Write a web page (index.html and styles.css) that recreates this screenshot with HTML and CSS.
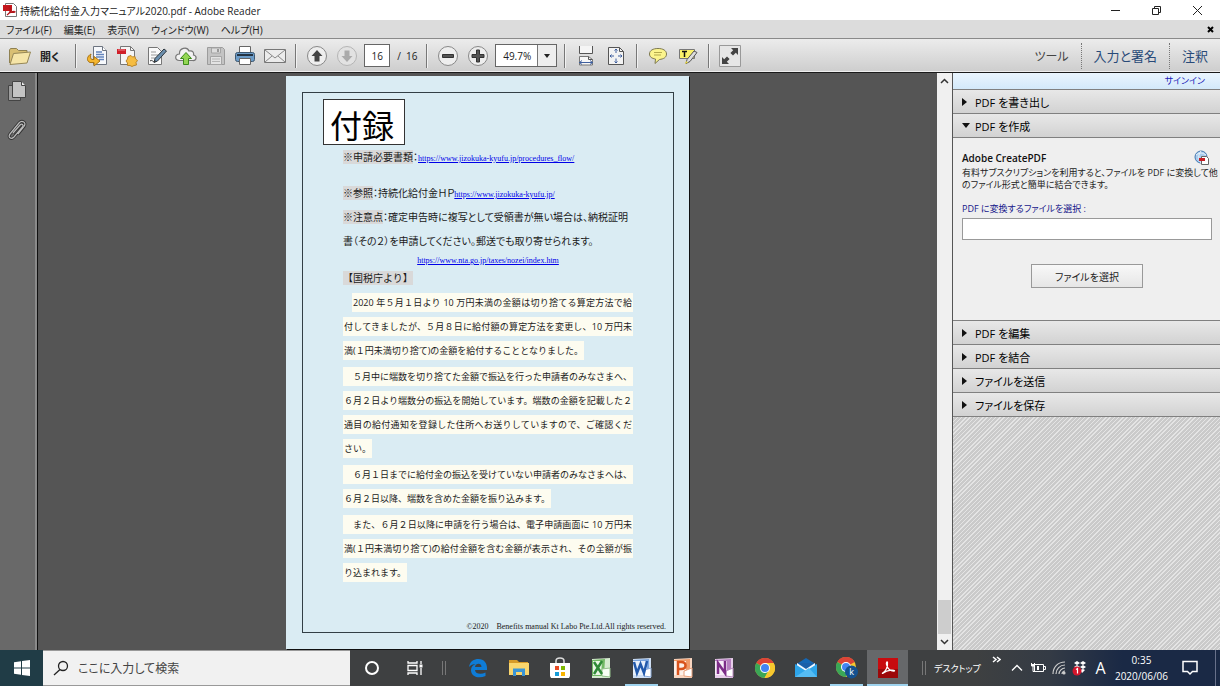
FILE: index.html
```html
<!DOCTYPE html>
<html lang="ja">
  <head>
    <meta charset="UTF-8">
    <title>持続化給付金入力マニュアル2020.pdf - Adobe Reader</title>
    <link rel="stylesheet" href="styles.css">
  </head>
  <body>
    <!-- Title bar -->
    <header class="titlebar">
      <svg class="app-icon" width="14" height="14" viewBox="0 0 14 14">
        <path d="M2.5.5h8l3 3v10h-11z" fill="#fff" stroke="#777"/>
        <path d="M0 2h9v6H0z" fill="#c4161c"/>
        <path d="M4 12c3-2 4-5 3-8-1-1-1 1 0 3s3 3 5 2c1-1-5-1-8 3z" fill="none" stroke="#b3151b" stroke-width="1.2"/>
      </svg>
      <span class="title-text">持続化給付金入力マニュアル2020.pdf - Adobe Reader</span>
      <div class="window-buttons">
        <button aria-label="最小化"><svg width="11" height="11"><path d="M1 5.5h9" stroke="#222"/></svg></button>
        <button aria-label="元に戻す"><svg width="11" height="11" fill="none" stroke="#222"><path d="M1.5 3.5h6v6h-6zM3.5 3.5v-2h6v6h-2"/></svg></button>
        <button aria-label="閉じる"><svg width="11" height="11"><path d="M1 1l9 9M10 1l-9 9" stroke="#222"/></svg></button>
      </div>
    </header>

    <!-- Menu -->
    <nav class="menubar">
      <button>ファイル(F)</button>
      <button>編集(E)</button>
      <button>表示(V)</button>
      <button>ウィンドウ(W)</button>
      <button>ヘルプ(H)</button>
      <button class="menu-close" aria-label="文書を閉じる"><svg width="7" height="7"><path d="M1 1l5 5M6 1l-5 5" stroke="#000" stroke-width="2"/></svg></button>
    </nav>

    <!-- Toolbar -->
    <div class="toolbar">
      <button class="open-button">
        <svg width="24" height="20" viewBox="0 0 24 20">
          <path d="M1.5 17V4l1-1.5h6l2 2h8.5V7" fill="#d9bf73" stroke="#8f8152"/>
          <path d="M2 18.5l3.5-11 17-1.5-3.5 11z" fill="#f6e5a8" stroke="#968756"/>
        </svg>
        開く
      </button>
      <span class="sep"></span>
      <div class="group file-group">
        <button aria-label="変換"><svg width="22" height="22" viewBox="0 0 22 22">
          <path d="M7.5 1.5h9l4 4v14h-13z" fill="#f7f9fc" stroke="#6d7480"/><path d="M16.5 1.5v4h4" fill="#fff" stroke="#6d7480"/>
          <path d="M10 7h6M10 9.5h8M10 12h8M13 14.5h5" stroke="#6385bd" stroke-width="1.5"/>
          <path d="M5 9C1 11 0 16 4 17.5h4V21l6-5-6-4.5v3H6C4 14 4 11 5 9z" fill="#f5b62f" stroke="#a87313"/>
        </svg></button>
        <button aria-label="PDF を作成"><svg width="22" height="22" viewBox="0 0 22 22">
          <path d="M4.500 1.500h10l4 4v14h-14z" fill="#f5f5f5" stroke="#777"/><path d="M14.5 1.5v4h4" fill="none" stroke="#777"/>
          <path d="M1 4h9v5H1z" fill="#d0202a"/><path d="M2 5h7" stroke="#ed858b"/>
          <path d="M15 10.5l1.500 1.500 2.500-.5.5 2.500 2 1.500-1.500 2 .5 2.500-2.500.5-2 1-2-1-2.500 0 0-2.500-1.500-2 1.500-2 .5-2.500z" fill="#f6bd42" stroke="#b9862d"/>
        </svg></button>
        <button aria-label="署名"><svg width="22" height="22" viewBox="0 0 22 22">
          <path d="M2.5 2.5h9l4 4v13h-13z" fill="#fafafa" stroke="#777"/>
          <path d="M5 7h5M5 10h7M5 13h5" stroke="#999"/>
          <path d="M18 4l2.5 2-9 10-3.5 1.5 1-4z" fill="#6b8fae" stroke="#2c353d"/><path d="M4 16c3-2 2 2 6 0" fill="none" stroke="#333"/>
        </svg></button>
        <button aria-label="アップロード"><svg width="22" height="22" viewBox="0 0 22 22">
          <path d="M4.5 15.5C-1 15 0 9 4.5 9 4 3 12 1 14 6c4-1 5 2 4.5 4 4 1 3 6-1 5.5z" fill="#f2f2f2" stroke="#777" stroke-width="1.2"/>
          <path d="M11 7.5l5.500 6h-3v6h-5v-6h-3z" fill="#93d653" stroke="#3c8a1a"/>
        </svg></button>
        <button aria-label="保存"><svg width="20" height="20" viewBox="0 0 20 20">
          <path d="M1.5 1.5h15l2 2v15h-17z" fill="#c4c4c4" stroke="#9c9c9c"/><path d="M5.5 2h9v5h-9z" fill="#ddd" stroke="#a5a5a5"/><path d="M11 3h2v3h-2z" fill="#999"/><path d="M4.5 10.500h11v8h-11z" fill="#e3e3e3" stroke="#a5a5a5"/><path d="M6 13h8M6 15.5h8" stroke="#b5b5b5"/>
        </svg></button>
        <button aria-label="印刷"><svg width="22" height="22" viewBox="0 0 22 22">
          <path d="M5.5 1.5h11v7h-11z" fill="#fff" stroke="#666"/>
          <rect x="1.5" y="7.5" width="19" height="9" rx="2" fill="#6c9cc8" stroke="#3e5870"/><path d="M3 10h16" stroke="#243444" stroke-width="2"/>
          <path d="M5.5 13.5h11v6h-11z" fill="#fff" stroke="#666"/>
        </svg></button>
        <button aria-label="メール"><svg width="22" height="16" viewBox="0 0 22 16">
          <path d="M.5 1.5h21v13H.5z" fill="#ececec" stroke="#777"/><path d="M1 2l10 8 10-8M1 14l7-6M21 14l-7-6" fill="none" stroke="#888"/>
        </svg></button>
      </div>
      <span class="sep"></span>
      <div class="group">
        <button aria-label="前のページ"><svg width="22" height="22" viewBox="0 0 22 22"><circle cx="11" cy="11" r="9.500" fill="#eee" stroke="#888"/><path d="M11 5l5.500 6H13.500v5.500h-5V11H5.500z" fill="#444"/></svg></button>
        <button aria-label="次のページ"><svg width="22" height="22" viewBox="0 0 22 22"><circle cx="11" cy="11" r="9.500" fill="#e2e2e2" stroke="#b5b5b5"/><path d="M11 17l5.500-6H13.500V5.500h-5V11H5.500z" fill="#aaa"/></svg></button>
        <input class="page-number" type="text" value="16" aria-label="ページ番号">
        <span class="page-total">/&nbsp; 16</span>
      </div>
      <span class="sep"></span>
      <div class="group">
        <button aria-label="縮小"><svg width="22" height="22" viewBox="0 0 22 22"><circle cx="11" cy="11" r="9.500" fill="#eee" stroke="#888"/><path d="M5.500 9.500h11v3h-11z" fill="#555" stroke="#333"/></svg></button>
        <button aria-label="拡大"><svg width="22" height="22" viewBox="0 0 22 22"><circle cx="11" cy="11" r="9.500" fill="#eee" stroke="#888"/><path d="M9.500 5h3v4.500H17v3h-4.500V17h-3v-4.500H5v-3h4.500z" fill="#555" stroke="#333"/></svg></button>
        <div class="zoom-box">
          <select aria-label="倍率">
            <option>49.7%</option>
            <option>75%</option>
            <option>100%</option>
          </select>
        </div>
      </div>
      <span class="sep"></span>
      <div class="group">
        <button aria-label="幅に合わせる"><svg width="18" height="20" viewBox="0 0 18 20" fill="none">
          <path d="M2.500 0v7.500h13V0" fill="#f5f5f5" stroke="#555"/><path d="M2.500 19V10.500h9l4 3V19z" fill="#f7f7f7" stroke="#777"/><path d="M11.500 10.500v3h4" stroke="#555"/>
          <path d="M2 16.500h14M5 14.500l-2.500 2 2.500 2M13 14.500l2.500 2-2.500 2" stroke="#3f5f9e"/>
        </svg></button>
        <button aria-label="全体を表示"><svg width="18" height="20" viewBox="0 0 18 20" fill="none">
          <path d="M1.500 1.500h11l4 4v13h-15z" fill="#f3f3f3" stroke="#555"/><path d="M12.500 1.500v4h4" stroke="#555"/>
          <path d="M9 3v4M9 12.500V17M3 10h4M11 10h4M7.500 4.500L9 3l1.500 1.500M7.500 15.500L9 17l1.500-1.500M4.500 8.500L3 10l1.500 1.500M13.500 8.500L15 10l-1.500 1.500" stroke="#3f5f9e"/>
        </svg></button>
      </div>
      <span class="sep"></span>
      <div class="group">
        <button aria-label="ノート注釈"><svg width="20" height="18" viewBox="0 0 20 18">
          <path d="M10 1.500c5 0 8.500 2 8.500 5.500s-3 5-7 5.500L7 16.500 7.500 12C4 11.500 1.500 10 1.500 7 1.500 3.500 5 1.500 10 1.500z" fill="#fbf48d" stroke="#7e7951"/><path d="M6 5.500h8M6 8h7" stroke="#b3a94d"/>
        </svg></button>
        <button aria-label="テキストをハイライト表示"><svg width="20" height="18" viewBox="0 0 20 18">
          <path d="M1.500 2.500h15v9h-15z" fill="#fbf26a" stroke="#777"/><path d="M4 4.500h5M6.500 4.500V10" stroke="#111" stroke-width="1.500"/>
          <path d="M16 4l3 1.500-7 9-4 2 1-4z" fill="#ddd" stroke="#555"/><path d="M8 14l2 1.500-3 1.500z" fill="#e8d63b"/>
        </svg></button>
      </div>
      <span class="sep"></span>
      <button aria-label="フルスクリーン"><svg width="22" height="22" viewBox="0 0 22 22">
        <path d="M.5.5h21v21H.5z" fill="#e6e6e6" stroke="#999"/>
        <path d="M19 3v7l-2.200-2.200-2.800 2.800-2.600-2.600 2.800-2.800L12 3zM3 19v-7l2.200 2.200L8 11.400l2.600 2.600-2.800 2.800L10 19z" fill="#444"/>
      </svg></button>
      <div class="panel-tabs">
        <button class="tab current">ツール</button>
        <button class="tab">入力と署名</button>
        <button class="tab">注釈</button>
      </div>
    </div>

    <main class="workspace">
      <!-- Navigation strip -->
      <aside class="nav-strip">
        <button aria-label="ページサムネール"><svg width="20" height="22" viewBox="0 0 20 22">
          <path d="M1.500 5.500h12v15h-12z" fill="#9d9d9d" stroke="#444"/><path d="M5.500 1.500h9l4 4v12h-13z" fill="#c4c4c4" stroke="#444"/><path d="M14.500 1.500v4h4" fill="#eee" stroke="#444"/>
        </svg></button>
        <button aria-label="添付ファイル"><svg width="20" height="22" viewBox="0 0 20 22" fill="none">
          <path d="M6 14l7-8c2-2 4 0 2.500 2L7 18c-3 3-6.500 0-4-3L12 4c3-3.500 8-.5 5 3.500L11 15" stroke="#333" stroke-width="3"/><path d="M6 14l7-8c2-2 4 0 2.500 2L7 18c-3 3-6.500 0-4-3L12 4c3-3.500 8-.5 5 3.500L11 15" stroke="#bbb" stroke-width="1.200"/>
        </svg></button>
      </aside>

      <!-- Document -->
      <section class="document">
        <article class="page">
          <div class="frame">
            <h1>付録</h1>
            <div class="notes">
              <p class="spaced"><mark>※申請必要書類</mark>：<a href="#">https://www.jizokuka-kyufu.jp/procedures_flow/</a></p>
              <p><mark>※参照</mark>：持続化給付金ＨＰ<a href="#">https://www.jizokuka-kyufu.jp/</a></p>
              <p><mark>※注意点</mark>：確定申告時に複写として受領書が無い場合は、納税証明<br>書（その２）を申請してください。郵送でも取り寄せられます。</p>
              <p class="center-link"><a href="#">https://www.nta.go.jp/taxes/nozei/index.htm</a></p>
              <p class="source"><mark>【国税庁より】</mark></p>
            </div>
            <div class="notice">
              <p>
                <span class="line full indent">2020 年５月１日より 10 万円未満の金額は切り捨てる算定方法で給</span>
                <span class="line full">付してきましたが、５月８日に給付額の算定方法を変更し、10 万円未</span>
                <span class="line">満(１円未満切り捨て)の金額を給付することとなりました。</span>
              </p>
              <p>
                <span class="line full">　５月中に端数を切り捨てた金額で振込を行った申請者のみなさまへ、</span>
                <span class="line full">６月２日より端数分の振込を開始しています。端数の金額を記載した２</span>
                <span class="line full">通目の給付通知を登録した住所へお送りしていますので、ご確認くだ</span>
                <span class="line">さい。</span>
              </p>
              <p>
                <span class="line full">　６月１日までに給付金の振込を受けていない申請者のみなさまへは、</span>
                <span class="line">６月２日以降、端数を含めた金額を振り込みます。</span>
              </p>
              <p>
                <span class="line full">　また、６月２日以降に申請を行う場合は、電子申請画面に 10 万円未</span>
                <span class="line full">満(１円未満切り捨て)の給付金額を含む金額が表示され、その全額が振</span>
                <span class="line">り込まれます。</span>
              </p>
            </div>
            <footer>©2020　Benefits manual Kt Labo Pte.Ltd.All rights reserved.</footer>
          </div>
        </article>
      </section>

      <div class="scrollbar">
        <button aria-label="上へスクロール"><svg width="9" height="6"><path d="M1 5l3.500-3.500L8 5" fill="none" stroke="#333" stroke-width="1.500"/></svg></button>
        <div class="track"><div class="thumb"></div></div>
        <button aria-label="下へスクロール"><svg width="9" height="6"><path d="M1 1l3.500 3.500L8 1" fill="none" stroke="#333" stroke-width="1.500"/></svg></button>
      </div>

      <!-- Tools panel -->
      <aside class="tools">
        <div class="signin"><a href="#">サインイン</a></div>
        <button class="section">PDF を書き出し</button>
        <button class="section open">PDF を作成</button>
        <div class="create">
          <div class="create-head">
            <h2>Adobe CreatePDF</h2>
            <svg width="16" height="16" viewBox="0 0 16 16">
              <circle cx="7" cy="7" r="6" fill="#a9cdee" stroke="#4478b0"/><path d="M2 5c4-3 7-2 10 0M7 1c-3 4-3 8 0 12" fill="none" stroke="#e8f3fc"/>
              <path d="M7.500 6.500h5l2 2v6h-7z" fill="#fff" stroke="#666"/><path d="M5 8h6v3H5z" fill="#c81f25"/>
            </svg>
          </div>
          <p>有料サブスクリプションを利用すると、ファイルを PDF に変換して他<br>のファイル形式と簡単に結合できます。</p>
          <label for="pdf-file">PDF に変換するファイルを選択 :</label>
          <input type="text" id="pdf-file">
          <button class="choose">ファイルを選択</button>
        </div>
        <button class="section">PDF を編集</button>
        <button class="section">PDF を結合</button>
        <button class="section">ファイルを送信</button>
        <button class="section">ファイルを保存</button>
        <div class="hatch"></div>
      </aside>
    </main>

    <!-- Windows taskbar -->
    <footer class="taskbar">
      <button class="start" aria-label="スタート"><svg width="16" height="16" viewBox="0 0 16 16" fill="#fff"><path d="M0 2.200l7-1v6.300H0zM8 1.100L16 0v7.500H8zM0 8.500h7v6.300l-7-1zM8 8.500h8V16l-8-1.100z"/></svg></button>
      <div class="search">
        <svg width="16" height="16" viewBox="0 0 16 16" fill="none" stroke="#222" stroke-width="1.300"><circle cx="10" cy="6" r="4.500"/><path d="M7 9.500L1 15"/></svg>
        <input type="text" placeholder="ここに入力して検索" aria-label="検索">
      </div>
      <button class="shell" aria-label="Cortana"><svg width="16" height="16"><circle cx="8" cy="8" r="6" fill="none" stroke="#fff" stroke-width="2"/></svg></button>
      <button class="shell" aria-label="タスクビュー"><svg width="16" height="16" viewBox="0 0 16 16" fill="none" stroke="#fff" stroke-width="1.300"><path d="M1 1v2h9V1M1 5.500h9v5H1zM1 15v-2h9v2M14 1v3M14 8v7"/><path d="M12.500 4.500h3v3h-3z" fill="#fff" stroke="none"/></svg></button>
      <span class="grip"></span>
      <div class="apps">
        <button aria-label="Edge"><svg width="20" height="20" viewBox="0 0 20 20"><path d="M1 9C2 3 6 1 10.500 1 16 1 19 5 19 10v2H7c.3 4 6 5 10.500 2.500V18C11 21 3 19 3 12c0-3 2-5 4.500-6C5 6 2.500 7 1 9zm6 0h6.500C13.500 4.500 7.500 5 7 9z" fill="#0f7cd6" fill-rule="evenodd"/></svg></button>
        <button aria-label="エクスプローラー"><svg width="20" height="18" viewBox="0 0 20 18"><path d="M0 1h8l2 2h9v3H0z" fill="#d79b28"/><path d="M0 4h20v12H0z" fill="#fad66d"/><path d="M4 17V9.500h12V17h-3v-4H7v4z" fill="#3b95d5"/></svg></button>
        <button aria-label="Microsoft Store"><svg width="22" height="22" viewBox="0 0 22 22"><path d="M7 7V4c0-4 8-4 8 0v3" fill="none" stroke="#ddd" stroke-width="1.500"/><path d="M1 6h20v13l-1 2H2l-1-2z" fill="#fff"/><path d="M6 9h4v4H6z" fill="#e84b25"/><path d="M12 9h4v4h-4z" fill="#7db700"/><path d="M6 15h4v4H6z" fill="#159cd8"/><path d="M12 15h4v4h-4z" fill="#f9b400"/></svg></button>
        <button aria-label="Excel"><svg width="20" height="20" viewBox="0 0 20 20"><path d="M1 1l18-1v20H1z" fill="#d6ebd0"/><path d="M1 2l13-1-1 17H1z" fill="#72b865"/><path d="M2 3h9l-1 14H2z" fill="#e9f6e4"/><path d="M11 11l8-1v9l-8-1z" fill="#f8fff5" stroke="#94c18c"/><path d="M3 4l8 12M11 3L3 16" stroke="#2f8a37" stroke-width="2.500"/></svg></button>
        <button class="running" aria-label="Word"><svg width="20" height="20" viewBox="0 0 20 20"><path d="M1 1l18-1v20H1z" fill="#cfdff4"/><path d="M1 2l16-1v14H1z" fill="#7ba5dd"/><path d="M1 3h14v14H1z" fill="#e8f0fb"/><path d="M12 12l7-2v9l-7-1z" fill="#fff" stroke="#8cabd9"/><path d="M2 4l3 11 3.500-9L12 15l3-12" fill="none" stroke="#2259ab" stroke-width="2.500"/></svg></button>
        <button aria-label="PowerPoint"><svg width="20" height="20" viewBox="0 0 20 20"><path d="M1 1l18-1v20H1z" fill="#f8d5c0"/><path d="M1 2l16-1v14H1z" fill="#ef9a68"/><path d="M1 3h12v14H1z" fill="#fdf0e8"/><path d="M11 13l8-3v9l-8-1z" fill="#fff" stroke="#e7a07a"/><path d="M5 17V4h3c6 0 6 7 0 7H5" fill="none" stroke="#d9531c" stroke-width="2.500"/></svg></button>
        <button aria-label="OneNote"><svg width="20" height="20" viewBox="0 0 20 20"><path d="M1 1l18-1v20H1z" fill="#e6cdea"/><path d="M1 2l16-1v14H1z" fill="#b67fc0"/><path d="M1 3h12v14H1z" fill="#f7edf8"/><path d="M12 13l7-3v9l-7-1z" fill="#fff" stroke="#b98ac0"/><path d="M4 16V5l7 10V3" fill="none" stroke="#7c2c88" stroke-width="2.500"/></svg></button>
        <button aria-label="Chrome"><svg width="20" height="20" viewBox="0 0 20 20"><circle cx="10" cy="10" r="10" fill="#f7c82e"/><path d="M10 10L1.300 5A10 10 0 0 1 18.700 5z" fill="#dc4437"/><path d="M10 10L1.300 5A10 10 0 0 0 9.500 20L14 12z" fill="#3aa757"/><path d="M10 5h8.700A10 10 0 0 1 9.500 20L14 12z" fill="#f7c82e"/><circle cx="10" cy="10" r="5" fill="#fff"/><circle cx="10" cy="10" r="4" fill="#4285f4"/></svg></button>
        <button aria-label="メール"><svg width="22" height="20" viewBox="0 0 22 20"><path d="M0 7l11-7 11 7z" fill="#1567b4"/><path d="M2 5h18v8H2z" fill="#f1f7fd"/><path d="M2 5h18l-9 6z" fill="#1a5fa8"/><path d="M0 6l11 7 11-7v13H0z" fill="#2da5ea"/><path d="M0 19L14 10l8 9z" fill="#55bcf3"/></svg></button>
        <button class="running" aria-label="Chrome k"><svg width="22" height="22" viewBox="0 0 22 22"><circle cx="10" cy="10" r="10" fill="#f7c82e"/><path d="M10 10L1.300 5A10 10 0 0 1 18.700 5z" fill="#dc4437"/><path d="M10 10L1.300 5A10 10 0 0 0 9.500 20L14 12z" fill="#3aa757"/><circle cx="10" cy="10" r="5" fill="#fff"/><circle cx="10" cy="10" r="4" fill="#4285f4"/><circle cx="15.500" cy="15" r="6.500" fill="#14518f"/><text x="15.500" y="18" text-anchor="middle" class="badge-letter">k</text></svg></button>
        <button class="running active" aria-label="Adobe Reader"><svg width="20" height="20" viewBox="0 0 20 20"><path d="M0 0h20v20H0z" fill="#c80b0f"/><path d="M0 11h20v9H0z" fill="#9c0809"/><path d="M4 15.500c4-2 6-7 5.500-11-.5-1.500-1.500 0-1 2 1 4 4 7 8 6.500 1-1-6-2-12 2.500z" fill="none" stroke="#fff" stroke-width="1.200"/></svg></button>
      </div>
      <span class="grip"></span>
      <div class="tray">
        <span class="desktop-label">デスクトップ</span>
        <button class="more" aria-label="その他"><svg width="9" height="7" fill="none" stroke="#fff" stroke-width="1.500"><path d="M1 1l3 2.500L1 6M5 1l3 2.500L5 6"/></svg></button>
        <button aria-label="隠れているアイコン"><svg width="12" height="8"><path d="M1 6.500l5-5 5 5" fill="none" stroke="#fff" stroke-width="1.300"/></svg></button>
        <button aria-label="電源"><svg width="16" height="12" viewBox="0 0 16 12" fill="none" stroke="#fff"><path d="M4.500 2.500h9v7h-9zM14 4.500h1.500v3H14M1.500 1v3h3V1M3 4v5.500h2"/><path d="M1 2h4v2H1zM7 4h2v4H7z" fill="#fff" stroke="none"/></svg></button>
        <button aria-label="ネットワーク"><svg width="14" height="14" viewBox="0 0 14 14" fill="none" stroke="#ccc" stroke-width="1.200"><path d="M1 13C1 6 6 1 13 1M4 13c0-5 4-9 9-9M7 13c0-3 3-6 6-6M10 13c0-1 1-3 3-3"/><circle cx="12" cy="12" r="1" fill="#fff"/></svg></button>
        <button aria-label="Dropbox"><svg width="16" height="16" viewBox="0 0 16 16"><path d="M5 1l3 2-3 2-3-2zM11 1l3 2-3 2-3-2zM11 5l3 2-3 2-3-2zM5 5l3 2-3 2-3-2zM8 10l3-1 2 1-3 3z" fill="#fff"/><circle cx="5" cy="11" r="4.500" fill="#d3152c"/><path d="M4 9.500L5.500 8.500v5" fill="none" stroke="#fff" stroke-width="1.200"/></svg></button>
        <button class="ime">A</button>
        <div class="clock"><span>0:35</span><span>2020/06/06</span></div>
        <button class="notify" aria-label="通知"><svg width="16" height="16" viewBox="0 0 16 16"><path d="M1 1.500h14v10h-4.500L8 14l-2.500-2.500H1z" fill="none" stroke="#fff" stroke-width="1.500"/></svg></button>
        <span class="peek"></span>
      </div>
    </footer>
  </body>
</html>
```
FILE: styles.css
```css
* {
  box-sizing: border-box;
}

body {
  display: flex;
  flex-direction: column;
  height: 100vh;
  margin: 0;
  overflow: hidden;
  background-color: #555;
  color: #222;
  font-family: "Open Sans", "Noto Sans CJK JP", sans-serif;
  font-size: 10px;
  font-feature-settings: "palt";
}

button, input, select {
  font: inherit;
  color: inherit;
  font-feature-settings: inherit;
  border: none;
  background: none;
  padding: 0;
  border-radius: 0;
}

button {
  display: flex;
  align-items: center;
  justify-content: center;
  white-space: nowrap;
}

svg {
  flex: none;
}

h1, h2, p {
  margin: 0;
  font-weight: normal;
}

/* Title bar */
.titlebar {
  display: flex;
  align-items: center;
  height: 20px;
  padding-left: 3px;
  background-color: #fff;
}

.title-text {
  margin-left: 3px;
}

.window-buttons {
  display: flex;
  margin-left: auto;
  padding-right: 2px;
}

.window-buttons button {
  width: 41px;
  height: 20px;
}

/* Menu */
.menubar {
  display: flex;
  align-items: center;
  gap: 12px;
  height: 18px;
  padding: 0 6px;
  background-color: #dcdcdc;
}

.menu-close {
  margin-left: auto;
}

/* Toolbar */
.toolbar {
  display: flex;
  align-items: center;
  height: 35px;
  padding-left: 8px;
  border-top: 1px solid #8a8a8a;
  border-bottom: 1px solid #1a1a1a;
  background: linear-gradient(#ececec, #cdcdcd);
  box-shadow: inset 0 -1px #eee;
}

.toolbar button {
  min-width: 26px;
  height: 26px;
}

.toolbar .open-button {
  gap: 8px;
  padding-right: 9px;
  font-size: 11px;
  font-weight: bold;
}

.group {
  display: flex;
  align-items: center;
  gap: 4px;
}

.file-group {
  width: 204px;
  gap: 0;
  justify-content: space-between;
}

.sep {
  width: 2px;
  height: 24px;
  margin: 0 7px;
  border-left: 1px solid #777;
  border-right: 1px solid #f2f2f2;
}

.page-number {
  width: 26px;
  height: 23px;
  border: 1px solid #666;
  background-color: #fff;
  text-align: center;
}

.page-total {
  width: 25px;
  padding-left: 3px;
  white-space: nowrap;
}

.zoom-box {
  position: relative;
}

.zoom-box select {
  appearance: none;
  width: 62px;
  height: 23px;
  padding-left: 7px;
  border: 1px solid #666;
  background: linear-gradient(to right, #fff 41px, #777 41px, #777 42px, #eee 42px);
}

.zoom-box::after {
  content: "";
  position: absolute;
  top: 10px;
  right: 7px;
  border: 3px solid transparent;
  border-top: 4px solid #222;
  border-bottom: none;
  pointer-events: none;
}

.panel-tabs {
  display: flex;
  align-items: center;
  margin-left: auto;
  font-size: 13px;
}

.toolbar .tab {
  padding: 0 12px;
  color: #284a78;
}

.toolbar .tab.current {
  color: #444;
  font-size: 12px;
}

.tab + .tab {
  border-left: 1px dotted #777;
}

/* Workspace */
.workspace {
  display: flex;
  flex: 1;
  min-height: 0;
}

.nav-strip {
  display: flex;
  flex-direction: column;
  align-items: center;
  gap: 17px;
  width: 38px;
  padding: 7px 4px 0 0;
  background-color: #696969;
  border-right: 1px solid #111;
  box-shadow: inset -2px 0 #8a8a8a;
}

.document {
  display: flex;
  justify-content: center;
  align-items: flex-start;
  flex: 1;
  padding-top: 3px;
  overflow: hidden;
  background-color: #555;
}

.page {
  width: 403px;
  padding: 16px 15px 16px 16px;
  background-color: #daecf3;
  box-shadow: 1px 1px #111;
  color: #1a1a1a;
}

.frame {
  border: 1px solid #333f45;
  padding: 6px 0 0 20px;
}

.page h1 {
  width: 82px;
  height: 46px;
  padding-left: 6px;
  border: 1px solid #333;
  background-color: #fff;
  color: #000;
  font-size: 32px;
  line-height: 52px;
}

.notes, .notice {
  width: 290px;
  margin-left: 20px;
}

.notes p {
  line-height: 24px;
  white-space: nowrap;
}

.notes .spaced {
  margin-bottom: 12px;
}

.notes .center-link {
  line-height: 13px;
  font-size: 8px;
  text-align: center;
}

.notes .source {
  font-feature-settings: normal;
}

.notes mark {
  background-color: #d9d9d9;
  color: inherit;
}

.notes a {
  color: #0000e8;
  font-family: "Liberation Serif", serif;
  font-size: 8px;
  line-height: 8px;
}

.notice {
  display: flex;
  flex-direction: column;
  gap: 7px;
  margin-top: 3px;
}

.notice p {
  display: flex;
  flex-direction: column;
  align-items: flex-start;
  gap: 5px;
}

.line {
  height: 19px;
  padding: 0 1px;
  background-color: #fdfcf0;
  font-feature-settings: normal;
  font-size: 9px;
  line-height: 19px;
  white-space: nowrap;
}

.line.full {
  align-self: stretch;
  text-align: justify;
  text-align-last: justify;
}

.line.indent {
  margin-left: 9px;
}

.frame footer {
  margin-top: 40px;
  padding-right: 7px;
  font-family: "Liberation Serif", "Noto Sans CJK JP", serif;
  font-size: 8px;
  line-height: 10px;
  text-align: right;
}

.scrollbar {
  display: flex;
  flex-direction: column;
  width: 15px;
  background-color: #f0f0f0;
}

.scrollbar button {
  height: 16px;
}

.track {
  display: flex;
  flex-direction: column;
  justify-content: flex-end;
  flex: 1;
}

.thumb {
  height: 34px;
  margin: 0 1px;
  background-color: #cdcdcd;
}

/* Tools panel */
.tools {
  display: flex;
  flex-direction: column;
  width: 268px;
  border-left: 1px solid #555;
  background-color: #efefef;
}

.signin {
  height: 16px;
  padding-right: 15px;
  background: linear-gradient(#eaf5fe, #d3e9fa);
  font-size: 9px;
  line-height: 16px;
  text-align: right;
}

.signin a {
  color: #1a1ab8;
  text-decoration: none;
}

.section {
  justify-content: flex-start;
  height: 24px;
  padding-left: 9px;
  border-top: 1px solid #808080;
  background: linear-gradient(#e8e8e8, #d2d2d2);
  color: #000;
  font-size: 11px;
}

.section::before {
  content: "";
  margin-right: 8px;
  border: 4px solid transparent;
  border-left: 5px solid #111;
  border-right: none;
}

.section.open::before {
  margin-right: 5px;
  border: 4px solid transparent;
  border-top: 5px solid #111;
  border-bottom: none;
}

.create {
  display: flex;
  flex-direction: column;
  padding: 11px 8px 32px 9px;
  border-top: 1px solid #808080;
  font-size: 9px;
}

.create-head {
  display: flex;
  align-items: center;
  justify-content: space-between;
  height: 18px;
  padding-right: 2px;
}

.create h2 {
  color: #111;
  font-size: 10px;
  font-weight: 600;
}

.create p {
  line-height: 12px;
  white-space: nowrap;
}

.create label {
  margin-top: 12px;
  color: #16168a;
  line-height: 12px;
}

.create input {
  height: 22px;
  margin-top: 3px;
  border: 1px solid #999;
  background-color: #fff;
}

.choose {
  align-self: center;
  width: 112px;
  height: 24px;
  margin-top: 24px;
  border: 1px solid #999;
  background: linear-gradient(#f8f8f8, #e6e6e6);
  font-size: 10px;
}

.hatch {
  flex: 1;
  border-top: 1px solid #808080;
  background: repeating-linear-gradient(135deg, #e4e4e4 0 1px, #cacaca 1px 3px);
}

/* Taskbar */
.taskbar {
  display: flex;
  align-items: stretch;
  height: 36px;
  background: linear-gradient(to right, #3e4041 80%, #343b45 86%, #1a2945 92%, #1a2945);
  color: #fff;
}

.start {
  width: 43px;
  background-color: #203c46;
}

.search {
  display: flex;
  align-items: center;
  gap: 9px;
  width: 307px;
  padding-left: 10px;
  border-top: 1px solid #999;
  border-bottom: 1px solid #999;
  background-color: #f1f1f1;
}

.search input {
  flex: 1;
  font-size: 12px;
}

.search input::placeholder {
  color: #444;
}

.shell {
  width: 43px;
}

.grip {
  align-self: center;
  width: 4px;
  height: 14px;
  margin: 0 11px 0 6px;
  border-left: 1px solid #777;
  border-right: 1px solid #777;
}

.apps {
  display: flex;
}

.apps button {
  width: 41px;
}

.apps .running {
  background: linear-gradient(#9fd3ee, #9fd3ee) center bottom / 33px 2px no-repeat;
}

.apps .active {
  background-color: #66686a;
  background-size: 41px 2px;
}

.badge-letter {
  fill: #fff;
  font-size: 9px;
}

.apps + .grip {
  margin: 0 8px 0 14px;
}

.tray {
  display: flex;
  align-items: center;
  flex: 1;
}

.tray button {
  width: 21px;
  height: 36px;
}

.tray .more {
  width: 20px;
  height: 18px;
  align-self: flex-start;
}

.desktop-label {
  width: 52px;
  font-size: 9px;
  white-space: nowrap;
}

.tray .ime {
  font-size: 16px;
}

.clock {
  display: flex;
  flex-direction: column;
  align-items: center;
  margin-left: auto;
  margin-right: 4px;
  line-height: 16px;
}

.tray .notify {
  width: 43px;
  padding-right: 8px;
}

.peek {
  width: 5px;
  height: 36px;
  border-left: 1px solid #68718a;
}
```
